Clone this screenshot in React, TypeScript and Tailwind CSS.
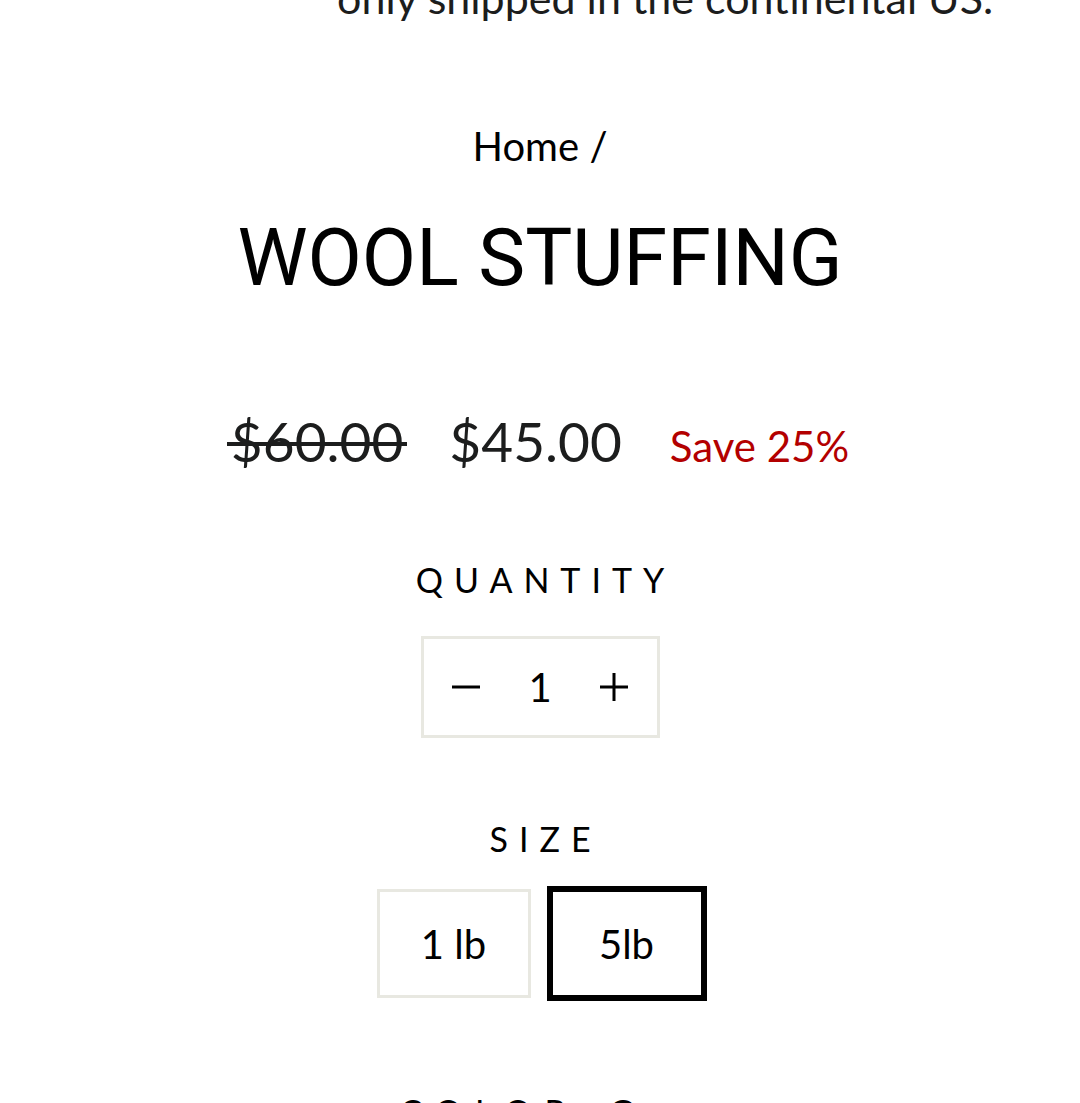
import React, { useState } from 'react';

const body = { fontFamily: 'Lato, "Open Sans", sans-serif' };

const App: React.FC = () => {
  const [qty, setQty] = useState(1);
  const [size, setSize] = useState('5lb');

  return (
    <div className="w-[1080px] h-[1103px] overflow-hidden bg-white text-[#1c1d1d]" style={body}>
      {/* tail of the shipping note above */}
      <p className="mt-[-28px] pl-[337px] text-[43px] leading-[52px] whitespace-nowrap">
        only shipped in the continental US.
      </p>

      <div className="flex flex-col items-center">
        <nav className="mt-[98px] text-[40px] leading-[48px] text-black">Home /</nav>

        <h1
          className="mt-[41px] text-[79px] leading-[94px] text-black"
          style={{ fontFamily: 'Roboto, sans-serif' }}
        >
          WOOL STUFFING
        </h1>

        <div className="mt-[104px] flex items-baseline leading-[65px]">
          <span className="relative text-[55px]">
            $60.00
            <span className="absolute left-[-4px] right-[-4px] top-[33px] h-[4px] bg-[#1c1d1d]" />
          </span>
          <span className="ml-[46px] text-[55px]">$45.00</span>
          <span className="ml-[48px] text-[42px] text-[#b30000]">Save 25%</span>
        </div>

        <label className="mt-[80px] pl-[11px] text-[34px] leading-[41px] tracking-[11px] text-black">QUANTITY</label>

        <div className="mt-[36px] flex h-[102px] w-[239px] items-center border-[3px] border-[#e8e8e1] text-black">
          <button className="flex h-full w-[85px] items-center justify-center" onClick={() => setQty(Math.max(1, qty - 1))}>
            <svg width="30" height="30" viewBox="0 0 30 30"><path d="M1 15h28" stroke="black" strokeWidth="3" /></svg>
          </button>
          <span className="flex-1 text-center text-[40px] leading-none">{qty}</span>
          <button className="flex h-full w-[85px] items-center justify-center" onClick={() => setQty(qty + 1)}>
            <svg width="30" height="30" viewBox="0 0 30 30"><path d="M1 15h28M15 1v28" stroke="black" strokeWidth="3" /></svg>
          </button>
        </div>

        <label className="mt-[80px] pl-[11px] text-[34px] leading-[41px] tracking-[11px] text-black">SIZE</label>

        <div className="mt-[30px] flex gap-[19px]">
          {['1 lb', '5lb'].map((s) => (
            <button
              key={s}
              onClick={() => setSize(s)}
              className={
                s === size
                  ? 'h-[109px] w-[154px] border-[3px] border-black text-[40px] text-black shadow-[0_0_0_3px_#000]'
                  : 'h-[109px] w-[154px] border-[3px] border-[#e8e8e1] text-[40px] text-black'
              }
            >
              {s}
            </button>
          ))}
        </div>

        <label className="mt-[93px] text-[34px] leading-[41px] text-black">
          <span className="tracking-[13px]">COLOR:</span> <span>Grey</span>
        </label>
      </div>
    </div>
  );
};

export default App;
